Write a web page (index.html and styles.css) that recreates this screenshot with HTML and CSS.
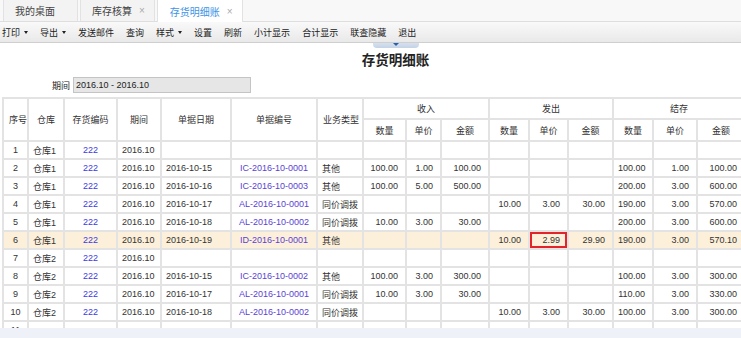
FILE: index.html
```html
<!DOCTYPE html>
<html lang="zh-cn">
<head>
  <meta charset="UTF-8">
  <meta name="viewport" content="width=device-width, initial-scale=1.0">
  <title>存货明细账</title>
  <link rel="stylesheet" href="styles.css">
</head>
<body>

  <!-- 标签页 -->
  <div class="tabs">
    <div class="tab tab-home">我的桌面</div>
    <div class="tab">库存核算<span class="close">×</span></div>
    <div class="tab active">存货明细账<span class="close">×</span></div>
  </div>

  <!-- 工具栏 -->
  <div class="toolbar">
    <span class="tool">打印<i class="caret"></i></span>
    <span class="tool">导出<i class="caret"></i></span>
    <span class="tool">发送邮件</span>
    <span class="tool">查询</span>
    <span class="tool">样式<i class="caret"></i></span>
    <span class="tool">设置</span>
    <span class="tool">刷新</span>
    <span class="tool">小计显示</span>
    <span class="tool">合计显示</span>
    <span class="tool">联查隐藏</span>
    <span class="tool">退出</span>
  </div>

  <div class="main">
    <div class="handle"><i></i></div>
    <div class="title">存货明细账</div>

    <div class="period">
      <label>期间</label>
      <div class="period-box">2016.10 - 2016.10</div>
    </div>

    <div class="grid-wrap">
      <table class="grid">
        <colgroup>
          <col style="width:25px"><col style="width:36px"><col style="width:53px"><col style="width:44px">
          <col style="width:70px"><col style="width:86px"><col style="width:46px">
          <col style="width:43px"><col style="width:35px"><col style="width:48px">
          <col style="width:40px"><col style="width:39px"><col style="width:45px">
          <col style="width:40px"><col style="width:44px"><col style="width:48px">
        </colgroup>
        <thead>
          <tr class="head1">
            <th rowspan="2">序号</th>
            <th rowspan="2">仓库</th>
            <th rowspan="2">存货编码</th>
            <th rowspan="2">期间</th>
            <th rowspan="2">单据日期</th>
            <th rowspan="2">单据编号</th>
            <th rowspan="2">业务类型</th>
            <th colspan="3">收入</th>
            <th colspan="3">发出</th>
            <th colspan="3">结存</th>
          </tr>
          <tr class="head2">
            <th>数量</th><th>单价</th><th>金额</th>
            <th>数量</th><th>单价</th><th>金额</th>
            <th>数量</th><th>单价</th><th>金额</th>
          </tr>
        </thead>
        <tbody>
          <tr>
            <td class="c">1</td><td>仓库1</td><td class="c link">222</td><td>2016.10</td><td></td><td></td><td></td>
            <td></td><td></td><td></td><td></td><td></td><td></td><td></td><td></td><td></td>
          </tr>
          <tr>
            <td class="c">2</td><td>仓库1</td><td class="c link">222</td><td>2016.10</td><td>2016-10-15</td><td class="c code">IC-2016-10-0001</td><td>其他</td>
            <td class="n">100.00</td><td class="n">1.00</td><td class="n">100.00</td><td></td><td></td><td></td><td class="n">100.00</td><td class="n">1.00</td><td class="n">100.00</td>
          </tr>
          <tr>
            <td class="c">3</td><td>仓库1</td><td class="c link">222</td><td>2016.10</td><td>2016-10-16</td><td class="c code">IC-2016-10-0003</td><td>其他</td>
            <td class="n">100.00</td><td class="n">5.00</td><td class="n">500.00</td><td></td><td></td><td></td><td class="n">200.00</td><td class="n">3.00</td><td class="n">600.00</td>
          </tr>
          <tr>
            <td class="c">4</td><td>仓库1</td><td class="c link">222</td><td>2016.10</td><td>2016-10-17</td><td class="c code">AL-2016-10-0001</td><td>同价调拨</td>
            <td></td><td></td><td></td><td class="n">10.00</td><td class="n">3.00</td><td class="n">30.00</td><td class="n">190.00</td><td class="n">3.00</td><td class="n">570.00</td>
          </tr>
          <tr>
            <td class="c">5</td><td>仓库1</td><td class="c link">222</td><td>2016.10</td><td>2016-10-18</td><td class="c code">AL-2016-10-0002</td><td>同价调拨</td>
            <td class="n">10.00</td><td class="n">3.00</td><td class="n">30.00</td><td></td><td></td><td></td><td class="n">200.00</td><td class="n">3.00</td><td class="n">600.00</td>
          </tr>
          <tr class="selected">
            <td class="c">6</td><td>仓库1</td><td class="c link">222</td><td>2016.10</td><td>2016-10-19</td><td class="c code">ID-2016-10-0001</td><td>其他</td>
            <td></td><td></td><td></td><td class="n">10.00</td><td class="n focus">2.99</td><td class="n">29.90</td><td class="n">190.00</td><td class="n">3.00</td><td class="n">570.10</td>
          </tr>
          <tr>
            <td class="c">7</td><td>仓库2</td><td class="c link">222</td><td>2016.10</td><td></td><td></td><td></td>
            <td></td><td></td><td></td><td></td><td></td><td></td><td></td><td></td><td></td>
          </tr>
          <tr>
            <td class="c">8</td><td>仓库2</td><td class="c link">222</td><td>2016.10</td><td>2016-10-15</td><td class="c code">IC-2016-10-0002</td><td>其他</td>
            <td class="n">100.00</td><td class="n">3.00</td><td class="n">300.00</td><td></td><td></td><td></td><td class="n">100.00</td><td class="n">3.00</td><td class="n">300.00</td>
          </tr>
          <tr>
            <td class="c">9</td><td>仓库2</td><td class="c link">222</td><td>2016.10</td><td>2016-10-17</td><td class="c code">AL-2016-10-0001</td><td>同价调拨</td>
            <td class="n">10.00</td><td class="n">3.00</td><td class="n">30.00</td><td></td><td></td><td></td><td class="n">110.00</td><td class="n">3.00</td><td class="n">330.00</td>
          </tr>
          <tr>
            <td class="c">10</td><td>仓库2</td><td class="c link">222</td><td>2016.10</td><td>2016-10-18</td><td class="c code">AL-2016-10-0002</td><td>同价调拨</td>
            <td></td><td></td><td></td><td class="n">10.00</td><td class="n">3.00</td><td class="n">30.00</td><td class="n">100.00</td><td class="n">3.00</td><td class="n">300.00</td>
          </tr>
          <tr>
            <td class="c">11</td><td></td><td></td><td></td><td></td><td></td><td></td>
            <td></td><td></td><td></td><td></td><td></td><td></td><td></td><td></td><td></td>
          </tr>
        </tbody>
      </table>
    </div>
  </div>

  <div class="statusbar"></div>

</body>
</html>
```

FILE: styles.css
```css
body {
  margin: 0;
  padding: 0;
  font-family: "Liberation Sans", "Noto Sans CJK SC", sans-serif;
  color: #333;
  background-color: #fff;
  overflow: hidden;
  height: 338px;
}

/* 标签页 */
.tabs {
  display: flex;
  gap: 2px;
  height: 21px;
  padding-left: 3px;
  background-color: #f8f8f8;
  border-bottom: 1px solid #dedede;
}

.tab {
  display: flex;
  align-items: center;
  padding: 0 9px 0 11px;
  font-size: 10px;
  color: #444;
  background-color: #f3f3f3;
  border: 1px solid #e2e2e2;
  border-top: none;
  border-bottom: none;
}

.tab-home {
  padding-right: 22px;
}

.tab.active {
  background-color: #fff;
  color: #3d94e6;
  padding-left: 12px;
  margin-bottom: -1px;
}

.tab .close {
  margin-left: 7px;
  font-size: 10px;
  color: #aaa;
}

/* 工具栏 */
.toolbar {
  display: flex;
  align-items: center;
  gap: 12px;
  height: 20px;
  padding-left: 2px;
  font-size: 9px;
  color: #222;
  background: linear-gradient(#f9f9f9, #e9e9e9);
  border-bottom: 1px solid #cfcfcf;
}

.tool {
  display: flex;
  align-items: center;
}

.caret {
  display: inline-block;
  margin-left: 4px;
  border-left: 2.5px solid transparent;
  border-right: 2.5px solid transparent;
  border-top: 3px solid #222;
}

/* 主体 */
.main {
  width: 791px;
}

.handle {
  width: 46px;
  height: 5px;
  margin: 0 auto;
  background: linear-gradient(#d6e1ef, #c3d2e6);
  border-radius: 0 0 4px 4px;
  display: flex;
  justify-content: center;
}

.handle i {
  border-left: 3px solid transparent;
  border-right: 3px solid transparent;
  border-top: 3px solid #2b5fae;
}

.title {
  height: 24px;
  line-height: 22px;
  text-align: center;
  font-family: "Noto Sans CJK SC", sans-serif;
  font-size: 13.5px;
  font-weight: bold;
  color: #222;
}

.period {
  display: flex;
  align-items: center;
  margin-top: 5px;
  padding-left: 52px;
  font-size: 9px;
}

.period label {
  margin-right: 3px;
  color: #222;
}

.period-box {
  width: 174px;
  height: 14px;
  line-height: 14px;
  padding-left: 2px;
  background-color: #e6e6e6;
  border: 1px solid #c4c4c4;
  color: #222;
}

/* 表格 */
.grid-wrap {
  margin-top: 4px;
  margin-left: 2px;
  height: 231px;
  overflow: hidden;
}

.grid {
  table-layout: fixed;
  border-collapse: collapse;
  font-size: 9px;
  width: 742px;
}

.grid th,
.grid td {
  border: 2px solid #e3e3e3;
  padding: 0 5px;
  white-space: nowrap;
  overflow: hidden;
}

.grid th {
  font-weight: normal;
  color: #333;
  text-align: center;
}

.head1 th {
  height: 19px;
}

.head2 th {
  height: 20px;
}

.grid td {
  height: 16px;
  text-align: left;
  padding-left: 4px;
}

.grid td.c {
  text-align: center;
  padding-left: 0;
  padding-right: 0;
}

.grid td.n {
  text-align: right;
  padding-right: 7px;
}

.grid td.link {
  color: #3b3be0;
}

.grid td.code {
  color: #5a3fd4;
}

.selected td {
  background-color: #fdf0da;
}

.grid td.focus {
  box-shadow: inset 0 0 0 2px #e3252b;
}

.statusbar {
  height: 10px;
  background-color: #eef2f8;
}
```
